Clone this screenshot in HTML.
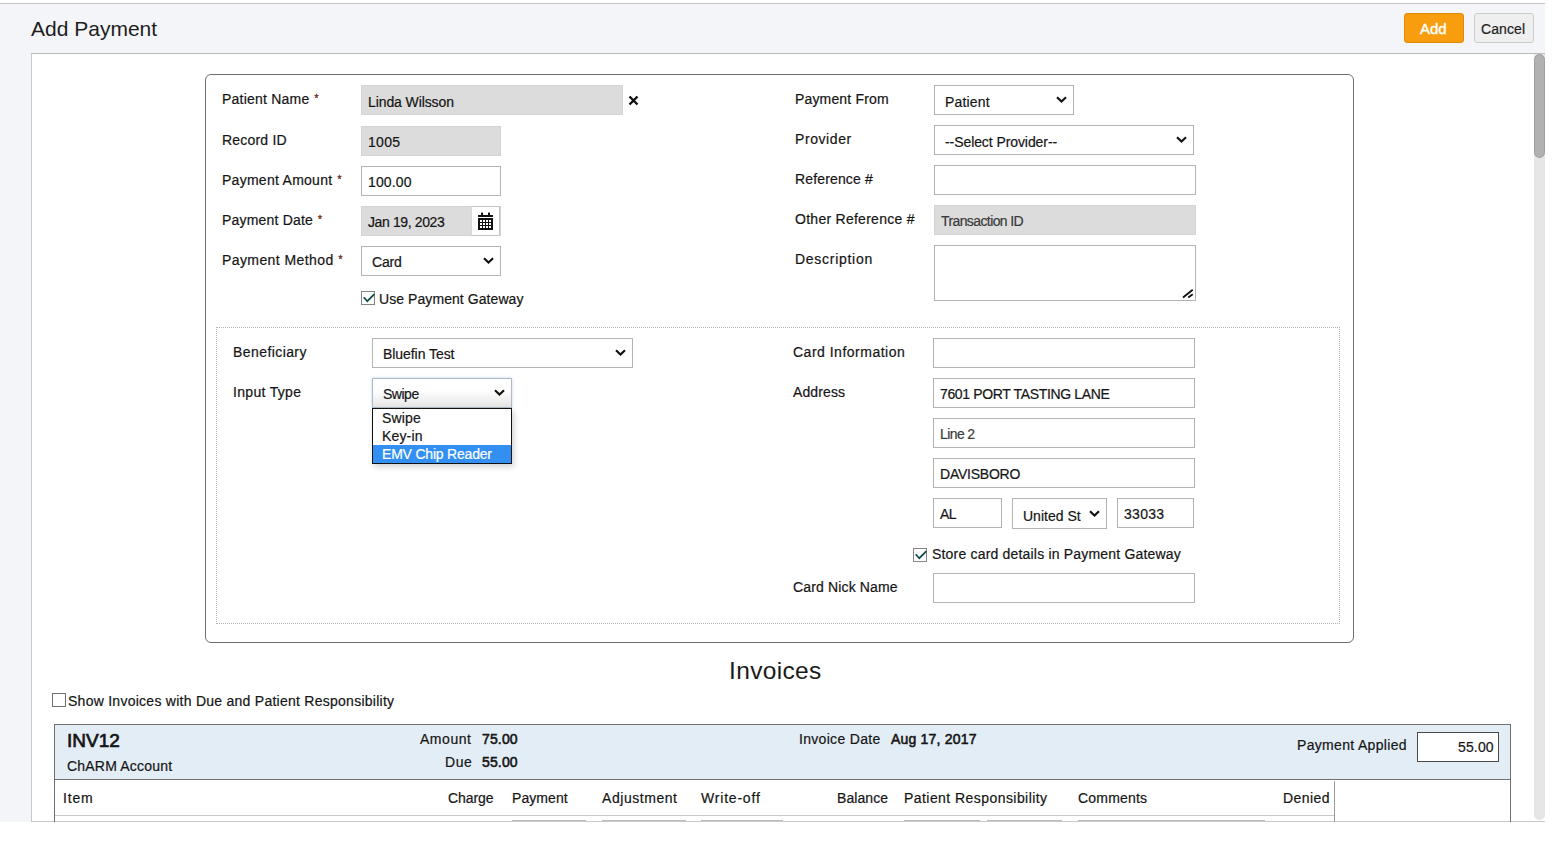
<!DOCTYPE html>
<html><head><meta charset="utf-8"><title>Add Payment</title>
<style>
*{box-sizing:border-box;margin:0;padding:0}
html,body{width:1567px;height:843px;overflow:hidden;background:#fff}
body{font-family:"Liberation Sans",sans-serif;font-size:14px;color:#151515;position:relative;-webkit-text-stroke:0.2px currentColor}
.ns{-webkit-text-stroke:0}
.a{position:absolute}
.t{position:absolute;white-space:nowrap;line-height:16px;height:16px;letter-spacing:0.15px}
.req{color:#6a2418;font-size:10px;position:relative;top:-2px;margin-left:5px;-webkit-text-stroke:0.3px currentColor}
.in{position:absolute;background:#fff;border:1px solid #b3b3b3;height:30px}
.in.g{background:#dcdcdc;border-color:#d4d4d4}
.in .v{position:absolute;left:6px;top:6px;line-height:16px;white-space:nowrap;font-size:14px}
.sel .v{left:10px}
.chev{position:absolute;top:10px;width:11px;height:7px}
.cb{position:absolute;width:14px;height:14px;border:1px solid #858585;background:#fff}
</style></head>
<body>
<!-- top line -->
<div class="a" style="left:0;top:0;width:1567px;height:3px;background:#fff"></div>
<div class="a" style="left:0;top:3px;width:1545px;height:1px;background:#c6c6c6"></div>
<!-- header -->
<div class="a" style="left:0;top:4px;width:1545px;height:818px;background:#f4f5f8"></div>
<div class="t ns" style="left:31px;top:17px;font-size:21px;line-height:24px;height:24px;color:#1d1d1d;letter-spacing:0">Add Payment</div>
<div class="a" style="left:1404px;top:13px;width:60px;height:30px;background:#f89d0e;border:1px solid #dd8a0c;border-radius:3px"></div>
<div class="t" style="left:1420px;top:20px;font-size:15px;line-height:18px;height:18px;color:#fff;letter-spacing:0;-webkit-text-stroke:0.45px #fff">Add</div>
<div class="a" style="left:1474px;top:13px;width:60px;height:30px;background:#efefef;border:1px solid #cbcbcb;border-radius:3px"></div>
<div class="t" style="left:1481px;top:20px;font-size:14px;line-height:18px;height:18px;color:#1d1d1d;letter-spacing:0.1px">Cancel</div>

<!-- content panel -->
<div class="a" style="left:31px;top:53px;width:1514px;height:769px;background:#fff;border-left:1px solid #c9c9c9;border-top:1px solid #b9b9b9;border-bottom:1px solid #c9c9c9"></div>
<!-- scrollbar -->
<div class="a" style="left:1534px;top:54px;width:11px;height:766px;background:#e6e6e6;border-radius:0 0 6px 6px"></div>
<div class="a" style="left:1534px;top:54px;width:11px;height:104px;background:#b1b1b1;border:1px solid #9f9f9f;border-radius:6px"></div>

<!-- form box -->
<div class="a" style="left:205px;top:74px;width:1149px;height:569px;border:1px solid #6f6f6f;border-radius:6px"></div>

<!-- left column -->
<div class="t" style="left:222px;top:91px;letter-spacing:0.22px">Patient Name<span class="req">*</span></div>
<div class="in g" style="left:361px;top:85px;width:262px"><span class="v" style="top:8px;letter-spacing:-0.1px">Linda Wilsson</span></div>
<svg class="a" style="left:628px;top:95px" width="11" height="11" viewBox="0 0 11 11"><path d="M1.5 1.5L9.5 9.5M9.5 1.5L1.5 9.5" stroke="#111" stroke-width="2.4"/></svg>

<div class="t" style="left:222px;top:132px;letter-spacing:0.2px">Record ID</div>
<div class="in g" style="left:361px;top:126px;width:140px"><span class="v" style="top:7px;letter-spacing:0.28px">1005</span></div>

<div class="t" style="left:222px;top:172px;letter-spacing:0.27px">Payment Amount<span class="req">*</span></div>
<div class="in" style="left:361px;top:166px;width:140px"><span class="v" style="top:7px;letter-spacing:0.13px">100.00</span></div>

<div class="t" style="left:222px;top:212px;letter-spacing:0.19px">Payment Date<span class="req">*</span></div>
<div class="in g" style="left:361px;top:206px;width:140px"><span class="v" style="top:7px;letter-spacing:-0.38px">Jan 19, 2023</span></div>
<div class="a" style="left:471px;top:206px;width:29px;height:30px;background:#fff;border:1px solid #c4c4c4;border-left-color:#d8d8d8"></div>
<svg class="a" style="left:478px;top:212px" width="15" height="18" viewBox="0 0 15 18"><rect x="3" y="0.6" width="2" height="3" fill="#111"/><rect x="10" y="0.6" width="2" height="3" fill="#111"/><rect x="0" y="3" width="15" height="2" fill="#111"/><rect x="0" y="6" width="15" height="12" fill="#111"/><g fill="#fff"><rect x="2" y="8" width="2" height="2"/><rect x="5" y="8" width="2" height="2"/><rect x="8" y="8" width="2" height="2"/><rect x="11" y="8" width="2" height="2"/><rect x="2" y="11" width="2" height="2"/><rect x="5" y="11" width="2" height="2"/><rect x="8" y="11" width="2" height="2"/><rect x="11" y="11" width="2" height="2"/><rect x="2" y="14" width="2" height="2"/><rect x="5" y="14" width="2" height="2"/><rect x="8" y="14" width="2" height="2"/><rect x="11" y="14" width="2" height="2"/></g></svg>

<div class="t" style="left:222px;top:252px;letter-spacing:0.41px">Payment Method<span class="req">*</span></div>
<div class="in sel" style="left:361px;top:246px;width:140px"><span class="v" style="top:7px;letter-spacing:-0.19px">Card</span>
<svg class="chev" style="left:121px" viewBox="0 0 11 7"><path d="M1 1.2L5.5 5.5L10 1.2" fill="none" stroke="#111" stroke-width="2.2"/></svg></div>

<div class="cb" style="left:361px;top:291px"></div>
<svg class="a" style="left:362px;top:292px" width="14" height="12" viewBox="0 0 14 12"><path d="M1.7 5.2L5.3 9.2L12.4 2.2" fill="none" stroke="#0f4a4a" stroke-width="1.7"/></svg>
<div class="t" style="left:379px;top:291px;letter-spacing:0.07px">Use Payment Gateway</div>

<!-- right column -->
<div class="t" style="left:795px;top:91px;letter-spacing:0.16px">Payment From</div>
<div class="in sel" style="left:934px;top:85px;width:140px"><span class="v" style="top:8px;letter-spacing:0.17px">Patient</span>
<svg class="chev" style="left:121px" viewBox="0 0 11 7"><path d="M1 1.2L5.5 5.5L10 1.2" fill="none" stroke="#111" stroke-width="2.2"/></svg></div>

<div class="t" style="left:795px;top:131px;letter-spacing:0.58px">Provider</div>
<div class="in sel" style="left:934px;top:125px;width:260px"><span class="v" style="top:8px;letter-spacing:-0.08px">--Select Provider--</span>
<svg class="chev" style="left:241px" viewBox="0 0 11 7"><path d="M1 1.2L5.5 5.5L10 1.2" fill="none" stroke="#111" stroke-width="2.2"/></svg></div>

<div class="t" style="left:795px;top:171px;letter-spacing:0.15px">Reference #</div>
<div class="in" style="left:934px;top:165px;width:262px"></div>

<div class="t" style="left:795px;top:211px;letter-spacing:0.27px">Other Reference #</div>
<div class="in g" style="left:934px;top:205px;width:262px"><span class="v" style="top:7px;color:#3a3a3a;letter-spacing:-0.6px">Transaction ID</span></div>

<div class="t" style="left:795px;top:251px;letter-spacing:0.72px">Description</div>
<div class="in" style="left:934px;top:245px;width:262px;height:56px"></div>
<svg class="a" style="left:1182px;top:287px" width="12" height="12" viewBox="0 0 12 12"><path d="M1 10.5L10.7 2.8M6.2 10.5L10.7 7.2" stroke="#111" stroke-width="1.8"/></svg>

<!-- dotted box -->
<div class="a" style="left:216px;top:327px;width:1124px;height:297px;border:1px dotted #b5b5b5"></div>

<div class="t" style="left:233px;top:344px;letter-spacing:0.42px">Beneficiary</div>
<div class="in sel" style="left:372px;top:338px;width:261px"><span class="v" style="top:7px;letter-spacing:-0.06px">Bluefin Test</span>
<svg class="chev" style="left:242px" viewBox="0 0 11 7"><path d="M1 1.2L5.5 5.5L10 1.2" fill="none" stroke="#111" stroke-width="2.2"/></svg></div>

<div class="t" style="left:233px;top:384px;letter-spacing:0.31px">Input Type</div>
<div class="in sel" style="left:372px;top:378px;width:140px;border-color:#aebac6;background:linear-gradient(#fff 40%,#e6e6e6);box-shadow:0 0 3px rgba(120,170,220,.45)"><span class="v" style="top:7px;letter-spacing:-0.49px">Swipe</span>
<svg class="chev" style="left:121px" viewBox="0 0 11 7"><path d="M1 1.2L5.5 5.5L10 1.2" fill="none" stroke="#111" stroke-width="2.2"/></svg></div>
<!-- dropdown list -->
<div class="a" style="left:372px;top:408px;width:140px;height:56px;background:#fff;border:1px solid #111;box-shadow:2px 3px 6px rgba(0,0,0,.18)"></div>
<div class="a" style="left:373px;top:445px;width:138px;height:18px;background:#3390f2"></div>
<div class="t" style="left:382px;top:410px">Swipe</div>
<div class="t" style="left:382px;top:428px">Key-in</div>
<div class="t" style="left:382px;top:446px;color:#fff;letter-spacing:-0.2px">EMV Chip Reader</div>

<div class="t" style="left:793px;top:344px;letter-spacing:0.5px">Card Information</div>
<div class="in" style="left:933px;top:338px;width:262px"></div>
<div class="t" style="left:793px;top:384px;letter-spacing:0.11px">Address</div>
<div class="in" style="left:933px;top:378px;width:262px"><span class="v" style="top:7px;letter-spacing:-0.35px">7601 PORT TASTING LANE</span></div>
<div class="in" style="left:933px;top:418px;width:262px"><span class="v" style="top:7px;color:#3a3a3a;letter-spacing:-0.6px">Line 2</span></div>
<div class="in" style="left:933px;top:458px;width:262px"><span class="v" style="top:7px;letter-spacing:-0.23px">DAVISBORO</span></div>
<div class="in" style="left:933px;top:498px;width:69px"><span class="v" style="top:7px;letter-spacing:-0.54px">AL</span></div>
<div class="in sel" style="left:1012px;top:498px;width:95px;height:31px"><span class="v" style="top:9px;letter-spacing:0.01px">United St</span>
<svg class="chev" style="left:76px;top:11px" viewBox="0 0 11 7"><path d="M1 1.2L5.5 5.5L10 1.2" fill="none" stroke="#111" stroke-width="2.2"/></svg></div>
<div class="in" style="left:1117px;top:498px;width:77px"><span class="v" style="top:7px;letter-spacing:0.29px">33033</span></div>

<div class="cb" style="left:913px;top:548px"></div>
<svg class="a" style="left:914px;top:549px" width="14" height="12" viewBox="0 0 14 12"><path d="M1.7 5.2L5.3 9.2L12.4 2.2" fill="none" stroke="#0f4a4a" stroke-width="1.7"/></svg>
<div class="t" style="left:932px;top:546px;letter-spacing:0.19px">Store card details in Payment Gateway</div>

<div class="t" style="left:793px;top:579px;letter-spacing:0.15px">Card Nick Name</div>
<div class="in" style="left:933px;top:573px;width:262px"></div>

<!-- invoices -->
<div class="t ns" style="left:729px;top:657px;font-size:24.5px;line-height:28px;height:28px;letter-spacing:0.35px;color:#1a1a1a">Invoices</div>
<div class="cb" style="left:52px;top:693px;border-color:#707070"></div>
<div class="t" style="left:68px;top:693px;letter-spacing:0.26px">Show Invoices with Due and Patient Responsibility</div>

<div class="a" style="left:54px;top:724px;width:1457px;height:98px;border:1px solid #6f6f6f;border-bottom:none"></div>
<div class="a" style="left:55px;top:725px;width:1455px;height:55px;background:#e3edf5;border-bottom:1px solid #6f6f6f"></div>
<div class="t" style="left:67px;top:731px;font-size:19px;line-height:20px;height:20px;-webkit-text-stroke:0.7px #151515;letter-spacing:0">INV12</div>
<div class="t" style="left:67px;top:758px;letter-spacing:0.2px">ChARM Account</div>
<div class="t" style="left:420px;top:731px;letter-spacing:0.53px">Amount</div>
<div class="t" style="left:482px;top:731px;-webkit-text-stroke:0.55px #151515;letter-spacing:0.15px">75.00</div>
<div class="t" style="left:445px;top:754px;letter-spacing:0.55px">Due</div>
<div class="t" style="left:482px;top:754px;-webkit-text-stroke:0.55px #151515;letter-spacing:0.15px">55.00</div>
<div class="t" style="left:799px;top:731px;letter-spacing:0.31px">Invoice Date</div>
<div class="t" style="left:891px;top:731px;-webkit-text-stroke:0.55px #151515;letter-spacing:0.2px">Aug 17, 2017</div>
<div class="t" style="left:1297px;top:737px;letter-spacing:0.32px">Payment Applied</div>
<div class="a" style="left:1417px;top:732px;width:82px;height:30px;background:#fff;border:1px solid #4a4a4a"></div>
<div class="t" style="left:1458px;top:739px">55.00</div>

<!-- column headers -->
<div class="a" style="left:1334px;top:781px;width:1px;height:41px;background:#9a9a9a"></div>
<div class="a" style="left:55px;top:815px;width:1279px;height:1px;background:#c9c9c9"></div>
<div class="t" style="left:63px;top:790px;letter-spacing:0.8px">Item</div>
<div class="t" style="left:448px;top:790px;letter-spacing:-0.07px">Charge</div>
<div class="t" style="left:512px;top:790px;letter-spacing:0.07px">Payment</div>
<div class="t" style="left:602px;top:790px;letter-spacing:0.55px">Adjustment</div>
<div class="t" style="left:701px;top:790px;letter-spacing:0.8px">Write-off</div>
<div class="t" style="left:837px;top:790px;letter-spacing:0.08px">Balance</div>
<div class="t" style="left:904px;top:790px;letter-spacing:0.44px">Patient Responsibility</div>
<div class="t" style="left:1078px;top:790px;letter-spacing:0.19px">Comments</div>
<div class="t" style="left:1283px;top:790px;letter-spacing:0.44px">Denied</div>
<!-- partial input tops -->
<div class="a" style="left:512px;top:820px;width:74px;height:1px;background:#bbb"></div>
<div class="a" style="left:602px;top:820px;width:84px;height:1px;background:#bbb"></div>
<div class="a" style="left:701px;top:820px;width:82px;height:1px;background:#bbb"></div>
<div class="a" style="left:904px;top:820px;width:76px;height:1px;background:#bbb"></div>
<div class="a" style="left:987px;top:820px;width:75px;height:1px;background:#bbb"></div>
<div class="a" style="left:1078px;top:820px;width:187px;height:1px;background:#bbb"></div>
<!-- bottom white -->
<div class="a" style="left:0;top:822px;width:1567px;height:21px;background:#fff"></div>
<div class="a" style="left:1545px;top:0;width:22px;height:843px;background:#fff"></div>
</body></html>
